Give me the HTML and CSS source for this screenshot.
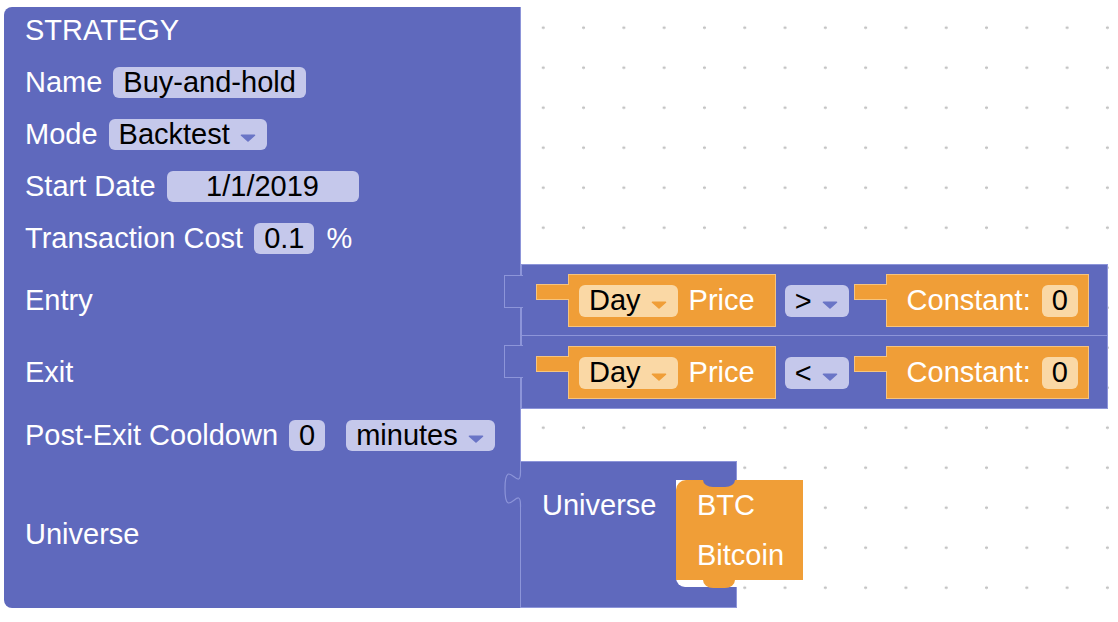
FILE: index.html
```html
<!DOCTYPE html>
<html>
<head>
<meta charset="utf-8">
<title>Strategy</title>
<link rel="stylesheet" href="styles.css">
</head>
<body>
<div class="workspace">
  <div class="strategy">
    <div class="cell head">
      <div class="line title"><span class="label">STRATEGY</span></div>
      <div class="line"><span class="label">Name</span><span class="field">Buy-and-hold</span></div>
      <div class="line"><span class="label">Mode</span><span class="field dd">Backtest<svg class="arrow" width="16" height="8" viewBox="0 0 16 8"><path d="M1.5 1.2 H14.5 L8 7 Z"/></svg></span></div>
      <div class="line"><span class="label">Start Date</span><span class="field date">1/1/2019</span></div>
      <div class="line"><span class="label">Transaction Cost</span><span class="field">0.1</span><span class="label pct">%</span></div>
    </div>

    <div class="cell row-entry"><span class="label">Entry</span></div>
    <div class="stmt entry">
      <div class="value">
        <div class="stub"></div>
        <div class="vbody"><span class="field peach dd">Day<svg class="arrow" width="16" height="8" viewBox="0 0 16 8"><path d="M1.5 1.2 H14.5 L8 7 Z"/></svg></span><span class="label">Price</span></div>
      </div>
      <span class="field dd op">&gt;<svg class="arrow" width="16" height="8" viewBox="0 0 16 8"><path d="M1.5 1.2 H14.5 L8 7 Z"/></svg></span>
      <div class="value const">
        <div class="stub"></div>
        <div class="vbody"><span class="label">Constant:</span><span class="field peach">0</span></div>
      </div>
    </div>

    <div class="cell row-exit"><span class="label">Exit</span></div>
    <div class="stmt exit">
      <div class="value">
        <div class="stub"></div>
        <div class="vbody"><span class="field peach dd">Day<svg class="arrow" width="16" height="8" viewBox="0 0 16 8"><path d="M1.5 1.2 H14.5 L8 7 Z"/></svg></span><span class="label">Price</span></div>
      </div>
      <span class="field dd op">&lt;<svg class="arrow" width="16" height="8" viewBox="0 0 16 8"><path d="M1.5 1.2 H14.5 L8 7 Z"/></svg></span>
      <div class="value const">
        <div class="stub"></div>
        <div class="vbody"><span class="label">Constant:</span><span class="field peach">0</span></div>
      </div>
    </div>

    <div class="cell row-cool">
      <span class="label">Post-Exit Cooldown</span><span class="field">0</span><span class="field dd mins">minutes<svg class="arrow" width="16" height="8" viewBox="0 0 16 8"><path d="M1.5 1.2 H14.5 L8 7 Z"/></svg></span>
    </div>

    <div class="cell row-univ last"><span class="label">Universe</span></div>
    <div class="ublock">
      <svg class="ptab" width="20" height="37" viewBox="0 0 20 37">
        <path class="ptab-fill" d="M20 0 H18.5 V2 c0 22 -15.5 -17.6 -15.5 16.5 s15.5 -5.5 15.5 16.5 V37 H20 Z"/>
        <path class="ptab-line" d="M18.5 0 V2 c0 22 -15.5 -17.6 -15.5 16.5 s15.5 -5.5 15.5 16.5 V37"/>
      </svg>
      <span class="label ulabel">Universe</span>
      <div class="slot">
        <div class="btc">
          <div>BTC</div>
          <div>Bitcoin</div>
        </div>
      </div>
    </div>
  </div>
</div>
</body>
</html>
```

FILE: styles.css
```css
* { box-sizing: border-box; }

body {
  margin: 0;
  font-family: "Liberation Sans", Arial, Helvetica, sans-serif;
}

.workspace {
  position: relative;
  width: 1118px;
  height: 622px;
  overflow: hidden;
  background-color: #fff;
  background-image: radial-gradient(circle, #c4c4c4 1.1px, rgba(255,255,255,0) 1.7px);
  background-size: 40.3px 40px;
  background-position: -0.75px 7.7px;
}

.strategy {
  position: absolute;
  left: 4px;
  top: 7px;
  display: grid;
  grid-template-columns: 517px auto;
  grid-template-rows: 257px 72px 73px 52px 147px;
  font-size: 29px;
  color: #fff;
}

.label { line-height: 1; white-space: nowrap; }

.cell {
  grid-column: 1;
  background: #5f69bd;
  border-right: 1px solid #8d95d9;
  display: flex;
  align-items: center;
  padding-left: 21px;
}

.head {
  grid-row: 1;
  flex-direction: column;
  align-items: stretch;
  border-top-left-radius: 8px;
}
.row-entry { grid-row: 2; }
.row-exit { grid-row: 3; }
.row-cool { grid-row: 4; gap: 11px; }
.row-univ { grid-row: 5; }
.last { border-bottom-left-radius: 8px; }

.line {
  height: 52px;
  display: flex;
  align-items: center;
  gap: 11px;
}
.line.title {
  height: 49px;
  padding-bottom: 3px;
}

.field {
  display: inline-flex;
  align-items: center;
  height: 31px;
  padding: 0 10px;
  background: #c5c8eb;
  color: #000;
  border-radius: 6px;
  gap: 10px;
  line-height: 1;
  white-space: nowrap;
}
.field.dd { padding-right: 11px; }
.field.date { width: 192px; justify-content: center; }
.field.mins { margin-left: 10px; }
.pct { margin-left: 1px; }

.arrow {
  display: block;
  margin-top: 8px;
  fill: #6a75c6;
  stroke: #6a75c6;
  stroke-width: 1.6;
  stroke-linejoin: round;
}
.field.peach {
  background: #fad8a5;
  height: 32px;
}
.field.peach .arrow {
  fill: #f09e37;
  stroke: #f09e37;
}

/* statement blocks */
.stmt {
  grid-column: 2;
  position: relative;
  width: 587px;
  background: #5f69bd;
  border: 1px solid #8d95d9;
  display: flex;
  align-items: flex-start;
  padding: 9px 0 0 14px;
}
.stmt.entry { grid-row: 2; }
.stmt.exit {
  grid-row: 3;
  border-top: none;
  padding-top: 10px;
}
.stmt::before {
  content: "";
  position: absolute;
  left: -18px;
  top: 10px;
  width: 18px;
  height: 31px;
  background: #5f69bd;
  border: 1px solid #8d95d9;
  border-right: none;
}
.stmt.exit::before { top: 9px; }

.value {
  display: flex;
  align-items: flex-start;
}
.stub {
  position: relative;
  z-index: 1;
  width: 33px;
  height: 16px;
  margin-top: 10px;
  margin-right: -1px;
  background: #f09e37;
  border: 1px solid #f6c47e;
  border-right: none;
}
.vbody {
  height: 53px;
  background: #f09e37;
  border: 1px solid #f6c47e;
  display: flex;
  align-items: center;
  gap: 11px;
  padding: 0 20px 0 10px;
}
.const { margin-left: 5px; }
.const .vbody { padding: 0 10px 0 20px; }

.op {
  margin: 11px 0 0 9px;
  height: 32px;
}

/* universe */
.ublock {
  grid-column: 2;
  grid-row: 5;
  position: relative;
  width: 216px;
  background: #5f69bd;
  border: 1px solid #8d95d9;
  border-left: none;
  display: flex;
  align-items: flex-start;
  padding: 18px 0 0 21px;
}
.ptab {
  position: absolute;
  left: -19px;
  top: 8px;
  display: block;
}
.ptab-fill { fill: #5f69bd; }
.ptab-line { fill: none; stroke: #8d95d9; stroke-width: 1.2; }

.ulabel { line-height: 50px; }

.slot {
  position: relative;
  margin-left: auto;
  margin-right: -1px;
  width: 61px;
  height: 107px;
  background: #fff;
  border-bottom-left-radius: 9px;
}
.btc {
  position: relative;
  width: 127px;
  height: 100px;
  background: #f09e37;
  border-top-left-radius: 10px;
  padding-left: 21px;
  line-height: 50px;
  color: #fff;
}
.btc::after {
  content: "";
  position: absolute;
  left: 27px;
  top: 0;
  width: 32px;
  height: 7px;
  background: #5f69bd;
  border-radius: 0 0 10px 10px / 0 0 7px 7px;
}
.btc::before {
  content: "";
  position: absolute;
  left: 27px;
  top: 100%;
  width: 32px;
  height: 8px;
  background: #f09e37;
  border-radius: 0 0 10px 10px / 0 0 8px 8px;
}
```
